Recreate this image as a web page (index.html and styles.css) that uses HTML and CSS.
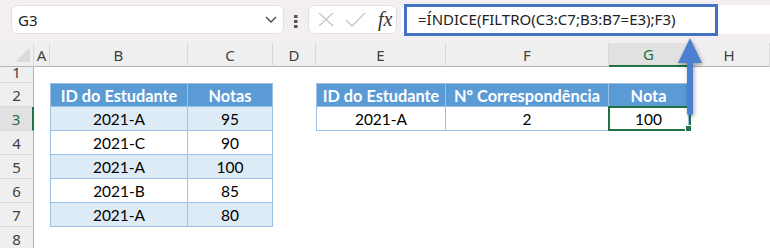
FILE: index.html
```html
<!DOCTYPE html>
<html lang="pt">
<head>
  <meta charset="UTF-8">
  <title>Notas dos Estudantes</title>
  <link rel="stylesheet" href="styles.css">
</head>
<body>
  <div class="toolbar">
    <div class="namebox">
      <span>G3</span>
      <svg class="chevron" width="12" height="7" viewBox="0 0 12 7"><path d="M1 1 L6 6 L11 1" fill="none" stroke="#444" stroke-width="1.3"/></svg>
    </div>
    <svg class="dots" width="4" height="13" viewBox="0 0 4 13"><rect x="0" y="0" width="3.5" height="3" fill="#555"/><rect x="0" y="5" width="3.5" height="3" fill="#555"/><rect x="0" y="10" width="3.5" height="3" fill="#555"/></svg>
    <div class="fxbox">
      <svg width="16" height="15" viewBox="0 0 16 15"><path d="M1 1 L15 14 M15 1 L1 14" stroke="#c9c7c9" stroke-width="1.3" fill="none"/></svg>
      <svg width="21" height="15" viewBox="0 0 21 15"><path d="M1 8 L7 14 L20 1" stroke="#c9c7c9" stroke-width="1.3" fill="none"/></svg>
      <span class="fx">fx</span>
    </div>
    <div class="formula">
      <div class="highlight">=ÍNDICE(FILTRO(C3:C7;B3:B7=E3);F3)</div>
    </div>
  </div>

  <table class="sheet">
    <colgroup>
      <col class="w-rh"><col class="w-a"><col class="w-b"><col class="w-c"><col class="w-d">
      <col class="w-e"><col class="w-f"><col class="w-g"><col class="w-h">
    </colgroup>
    <thead>
      <tr>
        <th class="corner"><svg width="16" height="16" viewBox="0 0 16 16"><path d="M15 0 L15 15 L0 15 Z" fill="#dadada"/></svg></th>
        <th>A</th><th>B</th><th>C</th><th>D</th><th>E</th><th>F</th><th class="active">G</th><th>H</th>
      </tr>
    </thead>
    <tbody>
      <tr class="r1">
        <th class="rh">1</th><td></td><td></td><td></td><td></td><td></td><td></td><td></td><td></td>
      </tr>
      <tr>
        <th class="rh">2</th><td></td>
        <td class="hd first">ID do Estudante</td><td class="hd">Notas</td>
        <td></td>
        <td class="hd first">ID do Estudante</td><td class="hd">Nº Correspondência</td><td class="hd">Nota</td>
        <td></td>
      </tr>
      <tr>
        <th class="rh active">3</th><td></td>
        <td class="d band first">2021-A</td><td class="d band">95</td>
        <td></td>
        <td class="d first">2021-A</td><td class="d">2</td><td class="d sel">100</td>
        <td></td>
      </tr>
      <tr>
        <th class="rh">4</th><td></td>
        <td class="d first">2021-C</td><td class="d">90</td>
        <td></td><td></td><td></td><td></td><td></td>
      </tr>
      <tr>
        <th class="rh">5</th><td></td>
        <td class="d band first">2021-A</td><td class="d band">100</td>
        <td></td><td></td><td></td><td></td><td></td>
      </tr>
      <tr>
        <th class="rh">6</th><td></td>
        <td class="d first">2021-B</td><td class="d">85</td>
        <td></td><td></td><td></td><td></td><td></td>
      </tr>
      <tr>
        <th class="rh">7</th><td></td>
        <td class="d band first">2021-A</td><td class="d band">80</td>
        <td></td><td></td><td></td><td></td><td></td>
      </tr>
      <tr>
        <th class="rh">8</th><td></td><td></td><td></td><td></td><td></td><td></td><td></td><td></td>
      </tr>
    </tbody>
  </table>

  <!-- callout arrow from the result cell up to the formula -->
  <svg class="arrow" width="30" height="84" viewBox="0 0 30 84">
    <path d="M14 2 L26 27 L17 27 L17 77 Q17 79 14 79 Q11 79 11 77 L11 27 L2 27 Z" fill="#4d7fd1"/>
  </svg>
</body>
</html>
```

FILE: styles.css
```css
body {
  margin: 0;
  width: 770px;
  height: 248px;
  overflow: hidden;
  position: relative;
  background: #fff;
  font-family: "Noto Sans", sans-serif;
}

/* top bar: name box + formula */
.toolbar {
  display: flex;
  align-items: flex-start;
  height: 43px;
  box-sizing: border-box;
  padding: 5px 0 0 11px;
  background: #f2eef2;
}

.namebox {
  width: 273px;
  height: 29px;
  box-sizing: border-box;
  display: flex;
  align-items: center;
  justify-content: space-between;
  padding: 0 6px 0 6px;
  background: #fff;
  border: 1px solid #e3dfe3;
  border-radius: 6px;
  font-size: 15px;
  color: #222;
}

.dots {
  margin: 10px 0 0 10px;
}

.fxbox {
  width: 89px;
  height: 29px;
  box-sizing: border-box;
  margin-left: 10px;
  display: flex;
  align-items: center;
  gap: 11px;
  padding-left: 9px;
  background: #fff;
  border: 1px solid #e3dfe3;
  border-radius: 6px;
}

.fx {
  font-family: "Liberation Serif", serif;
  font-style: italic;
  font-size: 20px;
  color: #333;
  margin-left: 1px;
}

.formula {
  flex: 1;
  height: 29px;
  margin-left: 4px;
  padding-left: 3px;
  display: flex;
  align-items: center;
  background: #fff;
  border-radius: 6px 0 0 6px;
}

.highlight {
  width: 314px;
  height: 32px;
  flex: none;
  box-sizing: border-box;
  padding-left: 11px;
  border: 3px solid #4472c4;
  font-size: 15px;
  line-height: 25px;
  color: #222;
  white-space: nowrap;
}

/* worksheet grid */
.sheet {
  width: 770px;
  table-layout: fixed;
  border-collapse: separate;
  border-spacing: 0;
}

.w-rh { width: 34px; }
.w-a { width: 16px; }
.w-b { width: 138px; }
.w-c { width: 85px; }
.w-d { width: 43px; }
.w-e { width: 130px; }
.w-f { width: 163px; }
.w-g { width: 80px; }
.w-h { width: 81px; }

.sheet th,
.sheet td {
  padding: 0;
  box-sizing: border-box;
}

.sheet thead th {
  height: 24px;
  background: #efefef;
  border-right: 1px solid #d9d9d9;
  border-bottom: 1px solid #b4b4b4;
  font-weight: normal;
  font-size: 15px;
  color: #404040;
  text-align: center;
}

.sheet thead th.corner {
  text-align: right;
  vertical-align: bottom;
  padding: 0 2px 3px 0;
}

.sheet thead th.corner svg {
  display: block;
  margin-left: auto;
}

.sheet thead th.active {
  background: #e1e1e1;
  color: #217346;
  border-bottom: 2px solid #217346;
}

.sheet tr {
  height: 24px;
}

.sheet tr.r1 {
  height: 16px;
}

.sheet th.rh {
  background: #efefef;
  border-right: 1px solid #b4b4b4;
  border-bottom: 1px solid #d9d9d9;
  font-weight: normal;
  font-size: 15px;
  color: #404040;
  text-align: center;
}

.sheet tr.r1 th.rh {
  line-height: 10px;
  vertical-align: top;
}

.sheet th.rh.active {
  background: #e1e1e1;
  color: #217346;
  border-right: 2px solid #217346;
}

/* data tables */
.sheet td.hd,
.sheet td.d {
  font-family: Lato, "Noto Sans", sans-serif;
  font-size: 15.5px;
  text-align: center;
  color: #000;
  border-right: 1px solid #9bc2e6;
  border-bottom: 1px solid #9bc2e6;
}

.sheet td.hd {
  background: #5b9bd5;
  color: #fff;
  font-weight: bold;
  font-size: 16.3px;
  border-top: 1px solid #9bc2e6;
  white-space: nowrap;
}

.sheet td.first {
  border-left: 1px solid #9bc2e6;
}

.sheet td.band {
  background: #ddebf7;
}

.sheet td.sel {
  position: relative;
}

.sheet td.sel::after {
  content: "";
  position: absolute;
  left: -1px;
  top: -1px;
  right: -3px;
  bottom: -1px;
  border: 2px solid #217346;
}

.sheet td.sel::before {
  content: "";
  position: absolute;
  right: -4px;
  bottom: -2px;
  width: 5px;
  height: 5px;
  background: #217346;
  border: 1px solid #fff;
  z-index: 1;
}

.arrow {
  position: absolute;
  left: 676px;
  top: 36px;
  filter: drop-shadow(1px 2px 2px rgba(0, 0, 0, 0.35));
}
```
